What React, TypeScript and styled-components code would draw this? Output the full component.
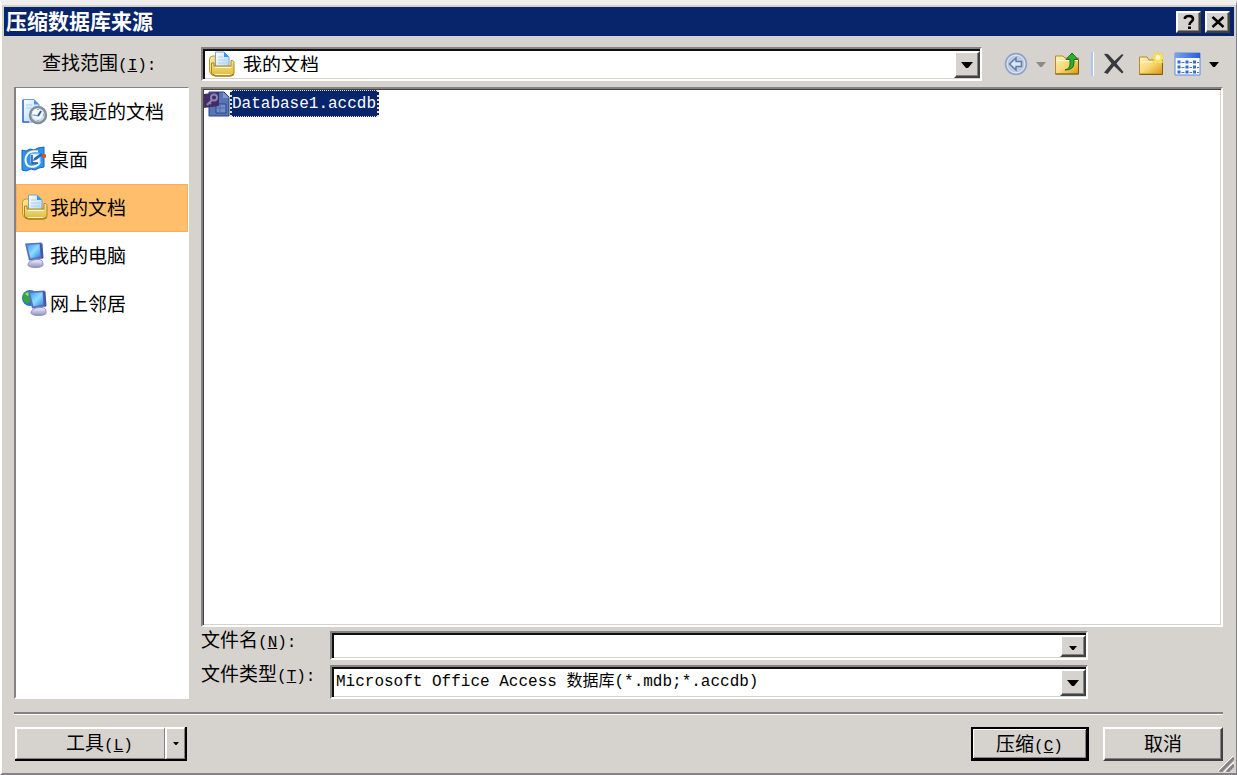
import React, { useState } from "react";
import styled, { createGlobalStyle, css } from "styled-components";

const face = "#d6d3ce";
const shade = "#848284";
const dark = "#424142";
const navy = "#08246b";

const GlobalStyle = createGlobalStyle`
  *, *::before, *::after { box-sizing: border-box; }
  body {
    margin: 0;
    background: ${face};
    color: #000;
    font-family: "Noto Sans CJK SC", sans-serif;
    font-size: 19px;
    line-height: 24px;
  }
  button, input, select { font: inherit; color: inherit; margin: 0; border-radius: 0; }
`;

const sunken = css`
  border: 2px solid;
  border-color: ${shade} #fff #fff ${shade};
  box-shadow: inset 2px 2px 0 #101010, inset -1px -1px 0 ${face};
  background: #fff;
`;

const raised = css`
  border: 2px solid;
  border-color: #fff ${dark} ${dark} #fff;
  box-shadow: inset -1px -1px 0 ${shade};
  background: ${face};
`;

const Dialog = styled.main`
  display: flex;
  flex-direction: column;
  min-height: 100vh;
  padding: 2px 2px 0 2px;
  border: solid;
  border-width: 5px 1px 2px 2px;
  border-color: #efeeec ${shade} ${shade} #fff;
  background: ${face};
`;

const TitleBar = styled.header`
  display: flex;
  align-items: center;
  gap: 4px;
  height: 29px;
  padding: 0 4px 0 2px;
  background: ${navy};
`;

const Title = styled.h1`
  flex: 1;
  margin: 0;
  color: #fff;
  font-size: 21px;
  font-weight: 700;
  line-height: 24px;
  padding-bottom: 4px;
`;

const CaptionButton = styled.button`
  display: grid;
  place-items: center;
  width: 25px;
  height: 22px;
  padding: 0;
  ${raised}
`;

const Content = styled.div`
  flex: 1;
  display: grid;
  grid-template-columns: 175px 1fr;
  grid-template-rows: 34px 1fr;
  gap: 6px 12px;
  padding: 11px 11px 13px 10px;
`;

const Latin = styled.span`
  font-family: "Liberation Mono", monospace;
  font-size: 16px;
`;

const LookInLabel = styled.label`
  align-self: center;
  padding-left: 28px;
`;

const LookInRow = styled.div`
  display: flex;
  align-items: center;
`;

const Combo = styled.div<{ $height: number }>`
  position: relative;
  flex: 1;
  display: flex;
  align-items: center;
  height: ${(p) => p.$height}px;
  padding: 2px 2px 2px 4px;
  ${sunken}
`;

const ComboSelect = styled.select<{ $mono?: boolean }>`
  flex: 1;
  min-width: 0;
  height: 24px;
  padding: 0 28px 4px ${(p) => (p.$mono ? 0 : 8)}px;
  border: 0;
  outline: 0;
  appearance: none;
  background: transparent;
  ${(p) =>
    p.$mono &&
    `padding-bottom: 0; font-family: "Liberation Mono", "Noto Sans CJK SC", monospace; font-size: 16px;`}
`;

const ComboInput = styled.input`
  flex: 1;
  min-width: 0;
  height: 20px;
  padding: 0;
  border: 0;
  outline: 0;
  background: transparent;
`;

const ComboArrow = styled.span<{ $low?: boolean }>`
  position: absolute;
  top: 2px;
  right: 0;
  bottom: 1px;
  display: grid;
  place-items: center;
  width: 26px;
  padding-top: ${(p) => (p.$low ? 4 : 0)}px;
  pointer-events: none;
  ${raised}
`;

const Toolbar = styled.div`
  display: flex;
  align-items: center;
  width: 241px;
  padding-left: 21px;
`;

const Tool = styled.button<{ $width: number; $after: number }>`
  display: grid;
  place-items: center;
  width: ${(p) => p.$width}px;
  height: 28px;
  margin-right: ${(p) => p.$after}px;
  padding: 0;
  border: 0;
  background: transparent;
`;

const ToolDivider = styled.span`
  width: 3px;
  height: 24px;
  margin-right: 9px;
  border-left: 2px solid #a8c8f0;
  background: #fff;
`;

const Places = styled.nav`
  border: 1px solid;
  border-width: 1px 1px 2px 2px;
  border-color: ${shade} #fff #fff ${shade};
  background: #fff;
`;

const Place = styled.button<{ $active: boolean }>`
  display: flex;
  align-items: center;
  gap: 2px;
  width: 100%;
  height: 48px;
  padding: 0 3px 2px;
  border: 1px solid ${(p) => (p.$active ? "#f7ae5a" : "transparent")};
  background: ${(p) => (p.$active ? "#ffbe6b" : "transparent")};
  text-align: left;
`;

const Main = styled.section`
  display: flex;
  flex-direction: column;
`;

const FileList = styled.div`
  flex: 1;
  margin-bottom: 4px;
  padding: 1px;
  ${sunken}
  box-shadow: inset 1px 1px 0 ${dark}, inset -1px -1px 0 ${face};
`;

const FileItem = styled.button`
  display: flex;
  align-items: center;
  padding: 0;
  border: 0;
  background: transparent;
`;

const FileName = styled.span`
  height: 27px;
  padding: 0 2px 0 1px;
  border: 2px dotted #e8dfc0;
  border-width: 1px 2px;
  background: ${navy};
  color: #fff;
  font-family: "Liberation Mono", monospace;
  font-size: 16px;
  line-height: 26px;
  padding: 0 1px 0 0;
`;

const Fields = styled.div`
  display: grid;
  grid-template-columns: 129px minmax(0, 758px);
  row-gap: 5px;
  margin-right: 135px;
`;

const FieldLabel = styled.label`
  height: 24px;
  line-height: 16px;
`;

const Footer = styled.footer`
  display: flex;
  align-items: flex-start;
  gap: 14px;
  margin: 0 11px 0 10px;
  padding: 13px 0 12px;
  border-top: 2px solid ${shade};
  box-shadow: inset 0 1px 0 #fff;
`;

const ToolsGroup = styled.div`
  display: flex;
  margin: 0 auto 0 1px;
  border-right: 2px solid #000;
  border-bottom: 2px solid #000;
`;

const ToolsPart = styled.button<{ $width: number; $indent?: number }>`
  display: grid;
  place-items: center;
  width: ${(p) => p.$width}px;
  height: 32px;
  padding: 0 0 0 ${(p) => p.$indent ?? 0}px;
  border: solid;
  border-width: 2px 1px 1px 2px;
  border-color: #fff ${shade} ${shade} #fff;
  background: ${face};
`;

const PushButton = styled.button<{ $default?: boolean }>`
  width: ${(p) => (p.$default ? 118 : 120)}px;
  height: 34px;
  padding: 0 0 2px;
  line-height: 28px;
  ${raised}
  ${(p) =>
    p.$default &&
    css`
      border-width: 2px 3px 3px 2px;
      border-color: #000;
      box-shadow: inset 1px 1px 0 #fff, inset -1px -1px 0 ${shade};
    `}
`;

const Grip = styled.svg`
  position: absolute;
  right: 3px;
  bottom: 3px;
`;

const Frame = styled.div`
  position: relative;
`;

const HiddenDefs = styled.svg`
  position: absolute;
`;

const Defs = () => (
  <HiddenDefs width="0" height="0" aria-hidden="true">
    <defs>
      <linearGradient id="gold" x1="0" y1="0" x2="1" y2="1">
        <stop offset="0" stopColor="#fff3b8" />
        <stop offset="0.5" stopColor="#fbd774" />
        <stop offset="1" stopColor="#d6970c" />
      </linearGradient>
      <linearGradient id="pocket" x1="0" y1="0" x2="0" y2="1">
        <stop offset="0" stopColor="#f3e79a" />
        <stop offset="1" stopColor="#e0b93c" />
      </linearGradient>
      <linearGradient id="paper" x1="0" y1="0" x2="1" y2="1">
        <stop offset="0" stopColor="#ffffff" />
        <stop offset="1" stopColor="#a9d6fa" />
      </linearGradient>
      <linearGradient id="screen" x1="0" y1="0" x2="1" y2="1">
        <stop offset="0" stopColor="#3b9cf0" />
        <stop offset="0.5" stopColor="#8edcff" />
        <stop offset="1" stopColor="#2f7fe0" />
      </linearGradient>
      <linearGradient id="metal" x1="0" y1="0" x2="0" y2="1">
        <stop offset="0" stopColor="#f4f5fc" />
        <stop offset="1" stopColor="#8c8fbe" />
      </linearGradient>
      <linearGradient id="bar" x1="0" y1="0" x2="1" y2="0">
        <stop offset="0" stopColor="#7aa4ee" />
        <stop offset="1" stopColor="#2a5fd0" />
      </linearGradient>
    </defs>
  </HiddenDefs>
);

const Arrow = ({ size = 12, color = "#000" }: { size?: number; color?: string }) => (
  <svg width={size} height={Math.ceil(size / 2)} viewBox="0 0 12 6" aria-hidden="true">
    <path d="M0 0H12L7 6H5Z" fill={color} />
  </svg>
);

const DocumentsIcon = () => (
  <svg width="28" height="28" viewBox="0 0 28 28" aria-hidden="true">
    <path d="M2.500 9Q3 6 6 6h3v19H5q-2-1-2.500-4Z" fill="url(#gold)" stroke="#c39a28" />
    <path d="M8.500 2H17l5 5v12H8.500Z" fill="url(#paper)" stroke="#7f9fc4" />
    <path d="M17 2v5h5Z" fill="#2e9cf5" />
    <path d="M11 7h5M11 10h9M11 13h9" stroke="#b3d0ea" />
    <path d="M7 16h17V10.500h1.500q1.500.5 1.500 2V23q0 3-3 3H8q-3 0-3.500-3V13H7Z" fill="url(#pocket)" stroke="#ac8618" />
    <path d="M8 17.500h16M8 24.500h15" stroke="#fdf6cc" />
    <path d="M6 24q1 2 3 2h14q2 0 3-2" fill="none" stroke="#a07a10" />
  </svg>
);

const RecentIcon = () => (
  <svg width="28" height="28" viewBox="0 0 28 28" aria-hidden="true">
    <path d="M3 2.500h11l5 5V25H3Z" fill="url(#paper)" stroke="#6e9bdc" />
    <path d="M3 3v22h6" fill="none" stroke="#3d6fc8" strokeWidth="1.500" />
    <path d="M14 2.500v5h5Z" fill="#4b92e8" />
    <path d="M6 8h6M6 11h5" stroke="#a9cdf0" />
    <circle cx="18" cy="18" r="8" fill="#c4dff2" stroke="#858c9c" strokeWidth="2.500" />
    <circle cx="17.500" cy="17" r="5.500" fill="#f0fbff" />
    <path d="M18 19l3-5" stroke="#315e92" strokeWidth="2" />
    <path d="M18 19l-4-1" stroke="#5b86b4" />
    <path d="M18 12v1M12.500 18h1M18 23v1M23 18h1" stroke="#d88b35" strokeWidth="1.500" />
  </svg>
);

const DesktopIcon = () => (
  <svg width="28" height="28" viewBox="0 0 28 28" aria-hidden="true">
    <path d="M2 5l4 1 4-2 4 1 4-2 6-1v20l-5 1-4 2-4-1-5 2-4-1Z" fill="#2f93ee" stroke="#1c62b8" />
    <path d="M18 6.500q-8-1-11 3.500t0 10q3 3 9 1 3-1 4-4" fill="none" stroke="#fffbe0" strokeWidth="2" />
    <path d="M11 9h9v9h-9Z" fill="#f2faff" stroke="#b6dcfb" />
    <path d="M13 16l1-3 7-5 2 2-7 5Z" fill="#2468b8" />
    <path d="M12 10v8h6" fill="none" stroke="#1a4f9e" strokeWidth="1.500" />
    <circle cx="24" cy="11" r="2.200" fill="#d6512c" />
  </svg>
);

const Monitor = () => (
  <>
    <path d="M5 2.500L21.500 1.500 23 17.500 9 19.500Z" fill="#5a6fc0" />
    <path d="M7 4l12.500-.8 1 12L10.500 17.500Z" fill="url(#screen)" />
    <path d="M20 2.500l2.500 0 1 14.500-2.300.5Z" fill="#4557a8" />
    <path d="M13 18l6-1 1 4-6 1Z" fill="#7379b4" />
    <path d="M8 23q1-3 5-4l5-.5q5 0 5 4v2q-2 2-7.500 2T8 24.500Z" fill="url(#metal)" stroke="#8d90bd" />
  </>
);

const ComputerIcon = () => (
  <svg width="28" height="28" viewBox="0 0 28 28" aria-hidden="true">
    <Monitor />
  </svg>
);

const NetworkIcon = () => (
  <svg width="28" height="28" viewBox="0 0 28 28" aria-hidden="true">
    <circle cx="10" cy="9" r="8" fill="#2b72dc" />
    <path d="M3 6q3-5 9-4l2 3-4 3 1 4-4 3-3-3q-2-3-1-6Z" fill="#35a83a" />
    <path d="M5 5q3-3 5-1L8 7Z" fill="#9be06d" />
    <g transform="translate(3 0)">
      <Monitor />
    </g>
  </svg>
);

const AccessIcon = () => (
  <svg width="26" height="26" viewBox="0 0 26 26" aria-hidden="true">
    <path d="M5 1h15l5 5v19H5Z" fill="#5674b6" stroke="#27427f" />
    <path d="M19 1v6h6Z" fill="#8098cb" />
    <path d="M12 13h10v9H12Z" fill="#7390c6" stroke="#29468b" />
    <path d="M12 17h10M16 13v9" stroke="#4f6bab" />
    <path d="M0 3l15-2v14L0 17Z" fill="#442c68" />
    <circle cx="10" cy="6.500" r="3" fill="none" stroke="#8d84b0" strokeWidth="2" />
    <path d="M8 9l-5 5M5 11l2 2" stroke="#8d84b0" strokeWidth="2" />
  </svg>
);

const BackIcon = () => (
  <svg width="24" height="24" viewBox="0 0 24 24" aria-hidden="true">
    <circle cx="12" cy="12" r="10.500" fill="#bccae0" stroke="#8fa3c6" strokeWidth="1.500" />
    <circle cx="12" cy="12" r="8.800" fill="none" stroke="#dbe5f2" />
    <path d="M5.500 12l6.500-6v3.500h5.500v5H12V18Z" fill="#dce8f6" stroke="#5c7db0" strokeWidth="1.500" />
  </svg>
);

const UpIcon = () => (
  <svg width="26" height="24" viewBox="0 0 26 24" aria-hidden="true">
    <path d="M1.500 6V4H9l2 2h13.500v16h-23Z" fill="url(#gold)" stroke="#b88a28" />
    <path d="M2 8.500h22" stroke="#fffbe4" />
    <path d="M1.500 22h23V8" fill="none" stroke="#7b5a12" />
    <path d="M11 18q5-1 5-6V7.500h-4L18 1l6 6.500h-4V11q0 7-9 7Z" fill="#2fae2c" stroke="#176f19" />
  </svg>
);

const DeleteIcon = () => (
  <svg width="22" height="24" viewBox="0 0 22 24" aria-hidden="true">
    <path d="M1 2q3-1 5 1l5.500 6L19 2l1.500 1-7 8.500 7 8.500-1.500 1.500-8-7.500-6.500 8L1 20.500 8.500 11.500Z" fill="#393a40" />
  </svg>
);

const NewFolderIcon = () => (
  <svg width="26" height="26" viewBox="0 0 26 26" aria-hidden="true">
    <path d="M1.500 8V6H9l2 3h13.500v14h-23Z" fill="url(#gold)" stroke="#b88a28" />
    <path d="M2 11h22" stroke="#fff8d8" />
    <path d="M1.500 23.500h23V11" fill="none" stroke="#805f14" />
    <path d="M20 0l1.200 3.500L25 2l-1.500 3.500L27 7l-3.500 1 1.500 4-3.800-2L20 13l-1.200-3-3.800 2 1.500-4L13 7l3.500-1.500L15 2l3.800 1.500Z" fill="#ffe45c" stroke="#f3c73a" strokeWidth=".5" />
    <circle cx="20" cy="6.500" r="2.200" fill="#fffde0" />
  </svg>
);

const ViewsIcon = () => (
  <svg width="27" height="24" viewBox="0 0 27 24" aria-hidden="true">
    <path d="M1 1h25v22H1Z" fill="#f6faff" stroke="#5d8ade" />
    <path d="M1 1h25v5H1Z" fill="url(#bar)" />
    <path d="M3.500 8.500h3v3h-3zM11.500 8.500h3v3h-3zM19 8.500h3v3h-3zM3.500 13.500h3v3h-3zM11.500 13.500h3v3h-3zM19 13.500h3v3h-3zM3.500 18.500h3v3h-3zM11.500 18.500h3v3h-3zM19 18.500h3v3h-3z" fill="#2e6cd6" />
    <path d="M7.500 10.500h3M15.500 10.500h2.500M23 10.500h2M7.500 15.500h3M15.500 15.500h2.500M23 15.500h2M7.500 20.500h3M15.500 20.500h2.500M23 20.500h2" stroke="#6c7280" />
  </svg>
);

const places = [
  { name: "我最近的文档", icon: <RecentIcon /> },
  { name: "桌面", icon: <DesktopIcon /> },
  { name: "我的文档", icon: <DocumentsIcon /> },
  { name: "我的电脑", icon: <ComputerIcon /> },
  { name: "网上邻居", icon: <NetworkIcon /> },
];

const Key = ({ letter, colon }: { letter: string; colon?: boolean }) => (
  <Latin>
    (<u>{letter}</u>){colon && ":"}
  </Latin>
);

export default function App() {
  const [active, setActive] = useState("我的文档");
  const [name, setName] = useState("");

  return (
    <Frame>
      <GlobalStyle />
      <Defs />
      <Dialog>
        <TitleBar>
          <Title>压缩数据库来源</Title>
          <CaptionButton aria-label="帮助">
            <svg width="14" height="16" viewBox="0 0 14 16" aria-hidden="true">
              <path d="M3 5V3.500Q4 2 7 2q4 0 4 3 0 2-2 3Q7.500 9 7.500 11" fill="none" stroke="#000" strokeWidth="2.600" />
              <path d="M6 12.500h3V15H6Z" />
            </svg>
          </CaptionButton>
          <CaptionButton aria-label="关闭">
            <svg width="14" height="14" viewBox="0 0 14 14" aria-hidden="true">
              <path d="M1.500 2l11 10M12.500 2l-11 10" stroke="#000" strokeWidth="2.500" />
            </svg>
          </CaptionButton>
        </TitleBar>

        <Content>
          <LookInLabel htmlFor="look-in">
            查找范围<Key letter="I" colon />
          </LookInLabel>
          <LookInRow>
            <Combo $height={34}>
              <DocumentsIcon />
              <ComboSelect id="look-in" value={active} onChange={(e) => setActive(e.target.value)}>
                {places.map((p) => (
                  <option key={p.name}>{p.name}</option>
                ))}
              </ComboSelect>
              <ComboArrow>
                <Arrow />
              </ComboArrow>
            </Combo>
            <Toolbar>
              <Tool $width={26} $after={7} aria-label="后退"><BackIcon /></Tool>
              <Tool $width={10} $after={8} aria-label="后退历史"><Arrow size={10} color="#8c8a86" /></Tool>
              <Tool $width={26} $after={11} aria-label="向上一级"><UpIcon /></Tool>
              <ToolDivider />
              <Tool $width={22} $after={13} aria-label="删除"><DeleteIcon /></Tool>
              <Tool $width={26} $after={10} aria-label="新建文件夹"><NewFolderIcon /></Tool>
              <Tool $width={27} $after={8} aria-label="视图"><ViewsIcon /></Tool>
              <Tool $width={10} $after={0} aria-label="视图选项"><Arrow size={10} /></Tool>
            </Toolbar>
          </LookInRow>

          <Places>
            {places.map((p) => (
              <Place key={p.name} $active={p.name === active} onClick={() => setActive(p.name)}>
                {p.icon}
                {p.name}
              </Place>
            ))}
          </Places>

          <Main>
            <FileList>
              <FileItem>
                <AccessIcon />
                <FileName>Database1.accdb</FileName>
              </FileItem>
            </FileList>
            <Fields>
              <FieldLabel htmlFor="file-name">
                文件名<Key letter="N" colon />
              </FieldLabel>
              <Combo $height={29}>
                <ComboInput id="file-name" value={name} onChange={(e) => setName(e.target.value)} />
                <ComboArrow $low>
                  <Arrow size={8} />
                </ComboArrow>
              </Combo>
              <FieldLabel htmlFor="file-type">
                文件类型<Key letter="T" colon />
              </FieldLabel>
              <Combo $height={34}>
                <ComboSelect id="file-type" $mono>
                  <option>Microsoft Office Access 数据库(*.mdb;*.accdb)</option>
                </ComboSelect>
                <ComboArrow>
                  <Arrow />
                </ComboArrow>
              </Combo>
            </Fields>
          </Main>
        </Content>

        <Footer>
          <ToolsGroup>
            <ToolsPart $width={150} $indent={18}>
              <span>
                工具<Key letter="L" />
              </span>
            </ToolsPart>
            <ToolsPart $width={20} aria-label="工具菜单">
              <Arrow size={6} />
            </ToolsPart>
          </ToolsGroup>
          <PushButton $default>
            压缩<Key letter="C" />
          </PushButton>
          <PushButton>取消</PushButton>
        </Footer>
        <Grip width="16" height="16" viewBox="0 0 16 16" aria-hidden="true">
          <path d="M2 16L16 2M9 16l7-7" stroke={shade} strokeWidth="3" />
          <path d="M-1 16L16-1M6 16L16 6" stroke="#fff" />
        </Grip>
      </Dialog>
    </Frame>
  );
}
